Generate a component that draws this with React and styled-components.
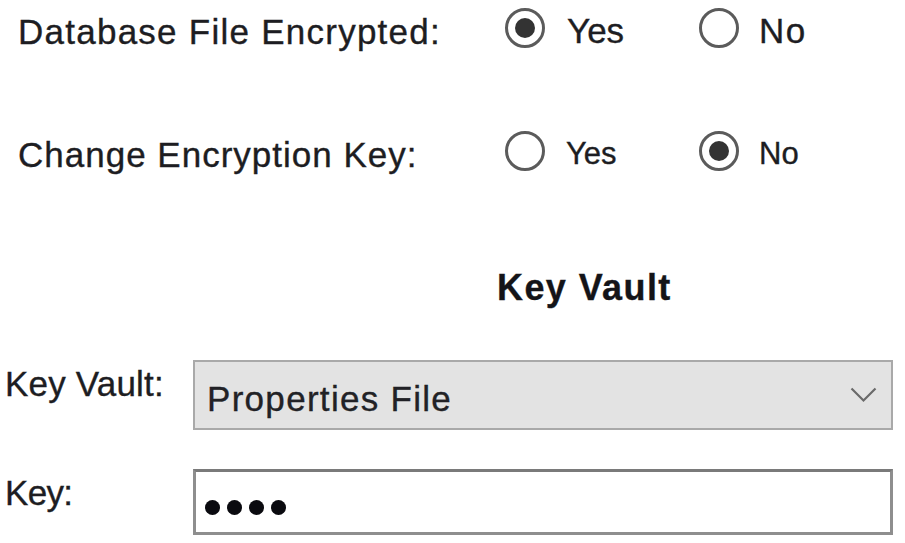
import styled, { createGlobalStyle } from "styled-components";

const GlobalStyle = createGlobalStyle`
  html, body {
    margin: 0;
    background: #ffffff;
  }
  body {
    font-family: "Liberation Sans", Arial, sans-serif;
    color: #1d1d22;
    -webkit-text-stroke: 0.35px #1d1d22;
  }
`;

const Page = styled.div`
  width: 905px;
  height: 543px;
  overflow: hidden;
  display: flex;
  flex-direction: column;
`;

const RadioRow = styled.div`
  display: flex;
  align-items: center;
  height: 56px;
  padding-left: 18px;
  margin-top: ${(p) => p.$top || 0}px;
`;

const RowLabel = styled.div`
  width: 487px;
  font-size: 35px;
  padding-top: 8px;
  letter-spacing: ${(p) => p.$spacing || 0}px;
  white-space: nowrap;
`;

const Option = styled.label`
  display: flex;
  align-items: center;
  gap: ${(p) => p.$gap || 21}px;
  width: ${(p) => p.$width || "auto"};
`;

const Circle = styled.span`
  position: relative;
  box-sizing: border-box;
  width: 40px;
  height: 40px;
  border-radius: 50%;
  border: 3px solid #5b5b5b;
  background: #fff;
  flex: none;

  &::after {
    content: "";
    display: ${(p) => (p.$checked ? "block" : "none")};
    position: absolute;
    left: 7px;
    top: 7px;
    width: 20px;
    height: 20px;
    border-radius: 50%;
    background: #333333;
  }
`;

const OptionText = styled.span`
  font-size: ${(p) => p.$size || 35}px;
  padding-top: 6px;
  letter-spacing: ${(p) => p.$spacing || 0}px;
`;

const Heading = styled.h2`
  margin: 88px 0 0;
  padding-left: 497px;
  font-size: 36px;
  line-height: 42px;
  font-weight: bold;
  letter-spacing: 1.4px;
  color: #141418;
`;

const FieldRow = styled.div`
  display: flex;
  align-items: flex-start;
  margin-top: ${(p) => p.$top}px;
`;

const FieldLabel = styled.div`
  box-sizing: border-box;
  width: 193px;
  padding-left: 5px;
  margin-top: 4px;
  font-size: 35px;
  line-height: 40px;
  letter-spacing: ${(p) => p.$spacing || 0}px;
  white-space: nowrap;
`;

const Combo = styled.div`
  box-sizing: border-box;
  width: 700px;
  height: 70px;
  display: flex;
  align-items: center;
  justify-content: space-between;
  padding: 8px 14px 0 12px;
  background: #e3e3e3;
  border: 2px solid #a9a9a9;
`;

const ComboText = styled.span`
  font-size: 35px;
  letter-spacing: 1.3px;
  color: #222226;
`;

const Chevron = styled.svg`
  width: 27px;
  height: 16px;
  margin-top: -8px;
  flex: none;
`;

const KeyInput = styled.div`
  box-sizing: border-box;
  width: 700px;
  height: 66px;
  display: flex;
  align-items: center;
  gap: 7px;
  padding: 10px 0 0 9px;
  background: #ffffff;
  border: 3px solid #8e8e8e;
  border-top-color: #7a7a7a;
`;

const Dot = styled.span`
  width: 15px;
  height: 15px;
  border-radius: 50%;
  background: #0a0a0f;
`;

function Radio({ checked, label, width, gap, spacing, size }) {
  return (
    <Option $width={width} $gap={gap}>
      <Circle $checked={checked} />
      <OptionText $spacing={spacing} $size={size}>
        {label}
      </OptionText>
    </Option>
  );
}

export default function App() {
  return (
    <>
      <GlobalStyle />
      <Page>
        <RadioRow>
          <RowLabel $spacing={1.25}>Database File Encrypted:</RowLabel>
          <Radio checked label="Yes" width="194px" gap={22} />
          <Radio label="No" gap={20} spacing={1.5} />
        </RadioRow>
        <RadioRow $top={67}>
          <RowLabel $spacing={1}>Change Encryption Key:</RowLabel>
          <Radio label="Yes" width="194px" gap={21} size={31} />
          <Radio checked label="No" gap={20} size={31} />
        </RadioRow>

        <Heading>Key Vault</Heading>

        <FieldRow $top={51}>
          <FieldLabel $spacing={0.2}>Key Vault:</FieldLabel>
          <Combo>
            <ComboText>Properties File</ComboText>
            <Chevron viewBox="0 0 27 16">
              <path d="M1.5 1.5 L13.5 13.5 L25.5 1.5" fill="none" stroke="#6a6a6a" strokeWidth="2.2" />
            </Chevron>
          </Combo>
        </FieldRow>

        <FieldRow $top={39}>
          <FieldLabel $spacing={-0.7}>Key:</FieldLabel>
          <KeyInput>
            <Dot />
            <Dot />
            <Dot />
            <Dot />
          </KeyInput>
        </FieldRow>
      </Page>
    </>
  );
}
